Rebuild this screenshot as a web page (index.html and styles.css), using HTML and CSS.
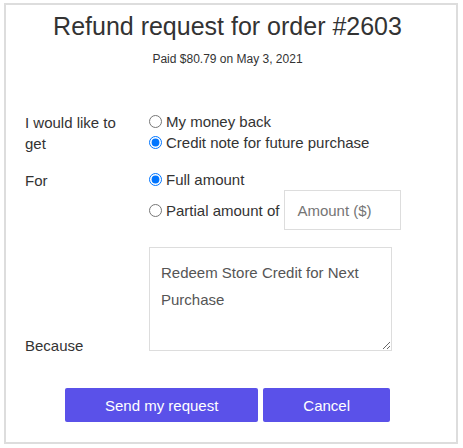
FILE: index.html
```html
<!DOCTYPE html>
<html>
<head>
<meta charset="utf-8">
<link rel="stylesheet" href="styles.css">
</head>
<body>
<div class="card">
  <h1 class="title">Refund request for order #2603</h1>
  <p class="paid">Paid $80.79 on May 3, 2021</p>
  <form class="form">
    <div class="label">I would like to get</div>
    <div class="field">
      <label class="opt"><input type="radio" name="get"> My money back</label>
      <label class="opt"><input type="radio" name="get" checked> Credit note for future purchase</label>
    </div>
    <div class="label">For</div>
    <div class="field">
      <label class="opt"><input type="radio" name="for" checked> Full amount</label>
      <label class="opt"><input type="radio" name="for"> Partial amount of <input class="amount" type="text" placeholder="Amount ($)"></label>
    </div>
    <div class="label because">Because</div>
    <div class="field area-wrap"><textarea class="reason">Redeem Store Credit for Next Purchase</textarea></div>
  </form>
  <div class="actions">
    <button class="btn" type="button">Send my request</button>
    <button class="btn" type="button">Cancel</button>
  </div>
</div>
</body>
</html>
```
FILE: styles.css
```css
html, body { margin: 0; padding: 0; background: #fff; }
body {
  font-family: "Liberation Sans", Arial, sans-serif;
  color: #333;
  padding: 3px 5px 4px 4px;
}
.card {
  border: 2px solid #ddd;
  height: 441px;
  box-sizing: border-box;
  padding: 7px 26px 0 19px;
}
.title {
  margin: 0;
  font-size: 25px;
  font-weight: normal;
  text-align: center;
  line-height: 28px;
}
.paid {
  margin: 12px 0 0;
  font-size: 12px;
  text-align: center;
  line-height: 14px;
}
.form {
  margin-top: 45px;
  display: grid;
  grid-template-columns: 119px 1fr;
  row-gap: 15px;
  font-size: 15px;
  line-height: 21px;
  align-items: baseline;
}
.label { padding-right: 24px; }
.field { display: flex; flex-direction: column; }
.opt { display: flex; align-items: center; white-space: nowrap; }
.opt input[type=radio] { margin: 0 4px 0 5px; width: 13px; height: 13px; }
.amount {
  font: inherit;
  width: 117px;
  height: 40px;
  box-sizing: border-box;
  border: 1px solid #ddd;
  padding: 0 12px;
  margin-left: 5px;
  color: #333;
}
.amount::placeholder { color: #757575; }
.area-wrap { display: block; padding-top: 2px; }
.reason {
  display: inline-block;
  vertical-align: baseline;
  margin-left: 5px;
  width: 243px;
  height: 104px;
  box-sizing: border-box;
  border: 1px solid #ddd;
  padding: 11px;
  font: inherit;
  line-height: 27px;
  color: #555;
  resize: both;
}
.actions {
  display: flex;
  justify-content: center;
  gap: 5px;
  margin-top: 32px;
}
.btn {
  font-family: "Liberation Sans", Arial, sans-serif;
  font-size: 15px;
  color: #fff;
  background: #5a51e9;
  border: none;
  border-radius: 2px;
  height: 34px;
  padding: 0 40px;
}
```
